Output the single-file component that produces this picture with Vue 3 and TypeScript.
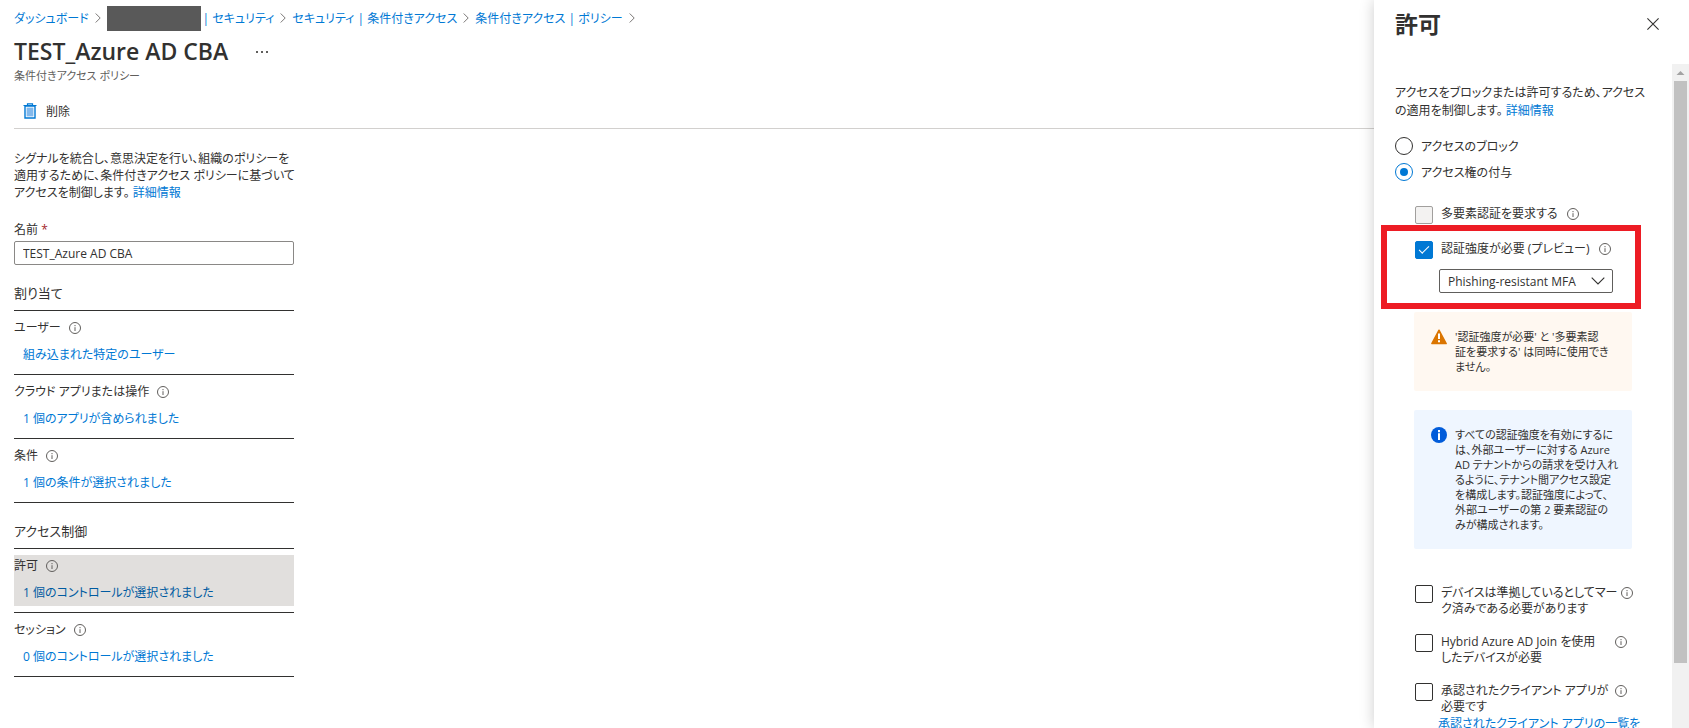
<script setup lang="ts">
import { ref } from 'vue'

interface Setting {
  label: string
  value: string
  active?: boolean
}

interface Group {
  title: string
  settings: Setting[]
}

interface Requirement {
  id: string
  lines: string[]
}

const crumbs: string[] = ['セキュリティ | 条件付きアクセス', '条件付きアクセス | ポリシー']

const groups: Group[] = [
  {
    title: '割り当て',
    settings: [
      { label: 'ユーザー', value: '組み込まれた特定のユーザー' },
      { label: 'クラウド アプリまたは操作', value: '1 個のアプリが含められました' },
      { label: '条件', value: '1 個の条件が選択されました' },
    ],
  },
  {
    title: 'アクセス制御',
    settings: [
      { label: '許可', value: '1 個のコントロールが選択されました', active: true },
      { label: 'セッション', value: '0 個のコントロールが選択されました' },
    ],
  },
]

const requirements: Requirement[] = [
  { id: 'compliant', lines: ['デバイスは準拠しているとしてマー', 'ク済みである必要があります'] },
  { id: 'hybrid', lines: ['Hybrid Azure AD Join を使用', 'したデバイスが必要'] },
  { id: 'approved', lines: ['承認されたクライアント アプリが', '必要です'] },
]

const warningLines: string[] = ["'認証強度が必要' と '多要素認", "証を要求する' は同時に使用でき", 'ません。']

const infoLines: string[] = [
  'すべての認証強度を有効にするに',
  'は、外部ユーザーに対する Azure',
  'AD テナントからの請求を受け入れ',
  'るように、テナント間アクセス設定',
  'を構成します。認証強度によって、',
  '外部ユーザーの第 2 要素認証の',
  'みが構成されます。',
]

const policyName = ref('TEST_Azure AD CBA')
const access = ref('grant')
const strengthRequired = ref(true)
const strength = ref('Phishing-resistant MFA')
const selected = ref<string[]>([])
</script>

<template>
  <svg class="defs" aria-hidden="true">
    <symbol id="info" viewBox="0 0 12 12">
      <circle cx="6" cy="6" r="5.5" fill="none" stroke="#605e5c" />
      <path d="M6 5.2V9M6 3v1.2" fill="none" stroke="#605e5c" />
    </symbol>
    <symbol id="next" viewBox="0 0 6 10">
      <path d="M.7.5 5.2 5 .7 9.5" fill="none" stroke="#797775" />
    </symbol>
  </svg>
  <div class="page">
    <main class="main">
      <nav class="crumbs">
        <a href="#">ダッシュボード</a>
        <svg class="next"><use href="#next" /></svg>
        <a href="#" class="tenant"><span class="redacted"></span>| セキュリティ</a>
        <svg class="next"><use href="#next" /></svg>
        <template v-for="crumb in crumbs" :key="crumb">
          <a href="#">{{ crumb }}</a>
          <svg class="next"><use href="#next" /></svg>
        </template>
      </nav>
      <header class="heading">
        <h1>TEST_Azure AD CBA</h1>
        <button type="button" class="more" aria-label="その他">
          <svg viewBox="0 0 12 2"><path d="M0 0h2v2H0zM5 0h2v2H5zM10 0h2v2h-2z" fill="#605e5c" /></svg>
        </button>
      </header>
      <p class="subtitle">条件付きアクセス ポリシー</p>
      <div class="toolbar">
        <button type="button" class="delete">
          <svg viewBox="0 0 14 16">
            <path d="M2 3h10v12H2z" fill="#fff" stroke="#0078d4" stroke-width="1.4" />
            <path d="M3.6 4.6h6.8v8.8H3.6z" fill="#83b9ec" />
            <path d="M.5 2.5h13M4.5 2.5V.8h5v1.7" fill="none" stroke="#0078d4" stroke-width="1.2" />
          </svg>
          削除
        </button>
      </div>
      <div class="policy">
        <p class="intro">
          シグナルを統合し、意思決定を行い、組織のポリシーを<br />適用するために、条件付きアクセス ポリシーに基づいて<br />アクセスを制御します。 <a href="#">詳細情報</a>
        </p>
        <label class="name-label" for="policy-name">名前 <span class="star">*</span></label>
        <input id="policy-name" v-model="policyName" class="name-input" type="text" />
        <section v-for="group in groups" :key="group.title" class="group">
          <h2>{{ group.title }}</h2>
          <div v-for="item in group.settings" :key="item.label" class="row">
            <div class="setting" :class="{ active: item.active }">
              <div class="setting-label">{{ item.label }}<svg class="info"><use href="#info" /></svg></div>
              <a href="#">{{ item.value }}</a>
            </div>
          </div>
        </section>
      </div>
    </main>

    <aside class="panel">
      <header class="panel-head">
        <h2>許可</h2>
        <button type="button" class="close" aria-label="閉じる">
          <svg viewBox="0 0 12 12"><path d="M.4.4l11.2 11.2M11.6.4.4 11.6" stroke="#323130" stroke-width="1.1" /></svg>
        </button>
      </header>
      <div class="panel-body">
        <div class="content">
          <p class="lead">
            アクセスをブロックまたは許可するため、アクセス<br />の適用を制御します。 <a href="#">詳細情報</a>
          </p>
          <div class="radios">
            <label><input v-model="access" type="radio" name="access" value="block" />アクセスのブロック</label>
            <label><input v-model="access" type="radio" name="access" value="grant" />アクセス権の付与</label>
          </div>
          <div class="option mfa">
            <label><input type="checkbox" disabled /><span>多要素認証を要求する</span></label>
            <svg class="info"><use href="#info" /></svg>
          </div>
          <div class="highlight">
            <div class="option">
              <label><input v-model="strengthRequired" type="checkbox" /><span>認証強度が必要 (プレビュー)</span></label>
              <svg class="info"><use href="#info" /></svg>
            </div>
            <div class="select">
              <select v-model="strength" aria-label="認証強度">
                <option>Phishing-resistant MFA</option>
              </select>
              <svg viewBox="0 0 14 8"><path d="M.7.7 7 7 13.3.7" fill="none" stroke="#323130" stroke-width="1.1" /></svg>
            </div>
          </div>
          <div class="notice warning">
            <svg viewBox="0 0 16 16">
              <path d="M8 1.2 15.2 14.6H.8z" fill="#db7500" stroke="#db7500" stroke-width="1.4" stroke-linejoin="round" />
              <path d="M7 4.5h2V10H7zM7 11.3h2v2H7z" fill="#fff" />
            </svg>
            <p><template v-for="line in warningLines" :key="line">{{ line }}<br /></template></p>
          </div>
          <div class="notice note">
            <svg viewBox="0 0 16 16">
              <circle cx="8" cy="8" r="8" fill="#015cda" />
              <path d="M7 6.3h2V13H7zM7 3h2v2.2H7z" fill="#fff" />
            </svg>
            <p><template v-for="line in infoLines" :key="line">{{ line }}<br /></template></p>
          </div>
          <div class="requirements">
            <div v-for="item in requirements" :key="item.id" class="option">
              <label>
                <input v-model="selected" type="checkbox" :value="item.id" />
                <span>{{ item.lines[0] }}<br />{{ item.lines[1] }}</span>
              </label>
              <svg class="info"><use href="#info" /></svg>
            </div>
          </div>
          <a href="#" class="clients">承認されたクライアント アプリの一覧を</a>
        </div>
        <div class="scrollbar" aria-hidden="true">
          <svg viewBox="0 0 17 17"><path d="M4.5 11 8.5 7l4 4z" fill="#a3a3a3" /></svg>
          <div class="track"><div class="thumb"></div></div>
        </div>
      </div>
    </aside>
  </div>
</template>

<style>
body {
  margin: 0;
  background: #fff;
}
</style>

<style scoped>
.defs {
  position: absolute;
  width: 0;
  height: 0;
}

.page {
  display: flex;
  height: 100vh;
  overflow: hidden;
  color: #323130;
  font-family: 'Open Sans', 'Noto Sans CJK JP', sans-serif;
  font-size: 12px;
  line-height: 17px;
  font-feature-settings: 'palt';
  white-space: nowrap;
}

h1,
h2,
p {
  margin: 0;
}

a {
  color: #0078d4;
  text-decoration: none;
}

button,
input,
select {
  font: inherit;
  font-feature-settings: inherit;
  color: inherit;
}

button {
  padding: 0;
  border: 0;
  background: none;
}

.info {
  flex: none;
  width: 12px;
  height: 12px;
}

.main {
  flex: 1;
  min-width: 0;
  padding-left: 14px;
}

.crumbs {
  display: flex;
  align-items: center;
  gap: 6px;
  height: 36px;
}

.next {
  width: 6px;
  height: 10px;
}

.tenant {
  display: flex;
  align-items: center;
  gap: 2px;
}

.redacted {
  width: 94px;
  height: 25px;
  background: #595959;
}

.heading {
  display: flex;
  align-items: center;
  gap: 28px;
  height: 31px;
}

.heading h1 {
  font-size: 23px;
  font-weight: 600;
  line-height: 31px;
}

.more svg {
  display: block;
  width: 12px;
  height: 2px;
}

.subtitle {
  color: #605e5c;
  font-size: 11px;
}

.toolbar {
  display: flex;
  align-items: center;
  height: 34px;
  padding: 10px 0 0 9px;
  border-bottom: 1px solid #d2d0ce;
}

.delete {
  display: flex;
  align-items: center;
  gap: 9px;
}

.delete svg {
  width: 14px;
  height: 16px;
}

.policy {
  width: 280px;
  padding-top: 21px;
}

.name-label {
  display: block;
  margin-top: 20px;
}

.star {
  color: #a4262c;
}

.name-input {
  display: block;
  box-sizing: border-box;
  width: 100%;
  height: 24px;
  margin-top: 3px;
  padding: 0 8px;
  border: 1px solid #8a8886;
  border-radius: 2px;
}

.group h2 {
  box-sizing: border-box;
  height: 46px;
  padding-top: 20px;
  border-bottom: 1px solid #323130;
  font-size: 13px;
  font-weight: 400;
}

.row {
  box-sizing: border-box;
  height: 64px;
  padding: 6px 0;
  border-bottom: 1px solid #323130;
}

.setting {
  height: 51px;
}

.setting a {
  display: block;
  padding: 10px 0 0 9px;
}

.setting-label {
  display: flex;
  align-items: center;
  gap: 8px;
  padding-top: 2px;
}

.active {
  background: #e1dfdd;
}

.active a {
  color: #005ba1;
}

.panel {
  display: flex;
  flex-direction: column;
  width: 315px;
  background: #fff;
  box-shadow: 0 0 14px rgba(0, 0, 0, 0.2);
}

.panel-head {
  display: flex;
  flex: none;
  align-items: center;
  justify-content: space-between;
  height: 48px;
  margin-bottom: 16px;
  padding: 0 30px 0 21px;
}

.panel-head h2 {
  font-size: 23px;
  font-weight: 700;
  line-height: 32px;
}

.close svg {
  display: block;
  width: 12px;
  height: 12px;
}

.panel-body {
  display: flex;
  flex: 1;
  min-height: 0;
}

.content {
  flex: 1;
  min-width: 0;
  overflow: hidden;
  padding: 20px 0 0 21px;
}

.lead {
  line-height: 18px;
}

.radios {
  display: grid;
  gap: 8px;
  margin-top: 17px;
}

.radios label {
  display: flex;
  align-items: center;
  gap: 8px;
  height: 18px;
}

.content input {
  appearance: none;
  display: grid;
  flex: none;
  place-items: center;
  box-sizing: border-box;
  width: 18px;
  height: 18px;
  margin: 0;
  border: 1px solid #323130;
  border-radius: 2px;
}

.content input[type='radio'] {
  border-radius: 50%;
}

.content input[type='radio']:checked {
  border-color: #0078d4;
}

.content input[type='radio']:checked::after {
  content: '';
  width: 8px;
  height: 8px;
  border-radius: 50%;
  background: #0078d4;
}

.content input[type='checkbox']:checked {
  border-color: #0078d4;
  background: #0078d4;
}

.content input[type='checkbox']:checked::after {
  content: '';
  width: 9px;
  height: 4px;
  margin-bottom: 4px;
  border: solid #fff;
  border-width: 0 0 1px 1px;
  transform: rotate(-45deg);
}

.content input:disabled {
  border-color: #a19f9d;
  background: #f3f2f1;
}

.option {
  display: flex;
  gap: 9px;
}

.option label {
  display: flex;
  gap: 8px;
  line-height: 16px;
}

.option .info {
  margin-top: 2px;
}

.mfa {
  margin: 25px 0 0 20px;
}

.highlight {
  width: 220px;
  margin: 1px 0 0 -14px;
  padding: 10px 0 10px 28px;
  border: 6px solid #ed1c24;
}

.select {
  position: relative;
  width: 174px;
  margin: 10px 0 0 24px;
}

.select select {
  appearance: none;
  display: block;
  box-sizing: border-box;
  width: 100%;
  height: 24px;
  padding: 0 24px 0 8px;
  border: 1px solid #605e5c;
  border-radius: 2px;
  background: #fff;
}

.select svg {
  position: absolute;
  top: 8px;
  right: 8px;
  width: 14px;
  height: 8px;
  pointer-events: none;
}

.notice {
  display: flex;
  gap: 8px;
  box-sizing: border-box;
  width: 218px;
  margin-left: 19px;
  padding: 17px 0 17px 17px;
  border-radius: 2px;
  font-size: 11px;
  line-height: 15px;
}

.notice svg {
  flex: none;
  width: 16px;
  height: 16px;
}

.warning {
  margin-top: 3px;
  background: #fff8f1;
}

.note {
  margin-top: 19px;
  background: #eff6ff;
}

.requirements {
  display: grid;
  gap: 17px;
  margin: 36px 0 0 20px;
}

.requirements .option {
  gap: 4px;
}

.requirements label {
  min-width: 196px;
}

.clients {
  display: block;
  margin-left: 43px;
}

.scrollbar {
  display: flex;
  flex-direction: column;
  width: 17px;
  background: #f1f1f1;
}

.scrollbar svg {
  flex: none;
  width: 17px;
  height: 17px;
}

.track {
  flex: 1;
  padding: 0 2px;
}

.thumb {
  height: 90%;
  background: #c1c1c1;
}
</style>
